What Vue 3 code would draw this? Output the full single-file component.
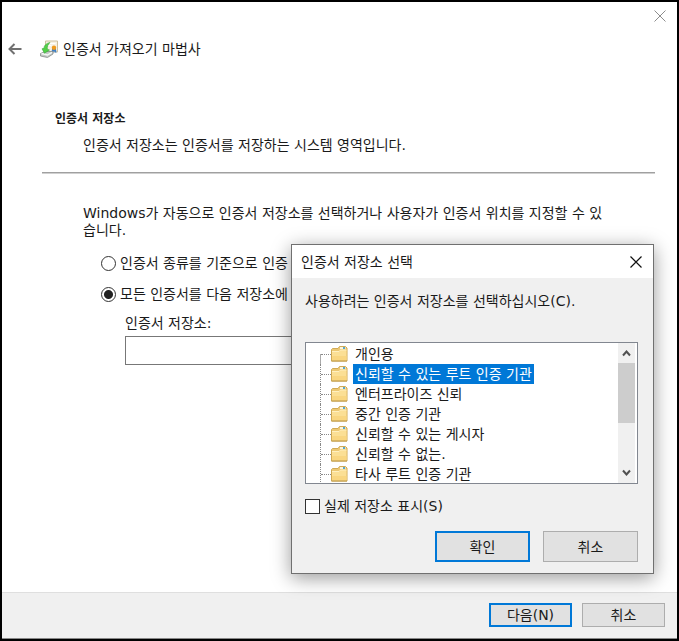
<template>
  <div class="wizard">
    <div class="top-bar">
      <button class="close-btn" type="button" aria-label="닫기">
        <svg width="12" height="12" viewBox="0 0 12 12"><path d="M.5.5l11 11M11.5.5l-11 11" stroke="#8c8c8c" fill="none" /></svg>
      </button>
    </div>

    <!-- Header -->
    <header class="header">
      <button class="back-btn" type="button" aria-label="뒤로">
        <svg width="14" height="12" viewBox="0 0 14 12">
          <path d="M6.500 1L1.500 6l5 5M1.500 6H13.500" fill="none" stroke="#707070" stroke-width="2" />
        </svg>
      </button>
      <svg class="cert-icon" width="18" height="18" viewBox="0 0 18 18">
        <path d="M5.500 1h12v11h-12z" fill="#f6f1e4" stroke="#cdbf9f" />
        <path d="M7.500 3.500h8M7.500 5.500h4" stroke="#fff" />
        <path d="M12.200 8l-.7 4.500h1.700l.8-1.500.8 1.500h1.700L15.800 8z" fill="#3f7fc4" />
        <circle cx="14" cy="7.800" r="2.200" fill="#f09a1c" />
        <path d="M.5 13.500L5 11.500h8v2.500l-5.500 3.500-7-1.500z" fill="#c3c8c5" stroke="#868c89" stroke-width=".8" />
        <path d="M1.500 13.500l6 1.500 4.500-2.700" fill="none" stroke="#f4f6f5" stroke-width="1.400" />
        <path d="M10 2.500C6 3.500 4 5.500 4 8.300L2 8.800l2.500 4.400 5-3.200-2.200-.8C7 6.500 8 4.500 10 2.500z" fill="#52d048" stroke="#3aa63a" stroke-width=".6" />
      </svg>
      <h1>인증서 가져오기 마법사</h1>
    </header>

    <!-- Page -->
    <main class="content">
      <h2>인증서 저장소</h2>
      <p class="subtitle">인증서 저장소는 인증서를 저장하는 시스템 영역입니다.</p>
      <hr />
      <div class="options">
        <p>Windows가 자동으로 인증서 저장소를 선택하거나 사용자가 인증서 위치를 지정할 수 있습니다.</p>
        <label class="radio">
          <input v-model="mode" type="radio" name="mode" value="auto" />
          <span>인증서 종류를 기준으로 인증</span>
        </label>
        <label class="radio">
          <input v-model="mode" type="radio" name="mode" value="manual" />
          <span>모든 인증서를 다음 저장소에</span>
        </label>
        <div class="store-field">
          <label for="store">인증서 저장소:</label>
          <input id="store" v-model="store" type="text" />
        </div>
      </div>
    </main>

    <footer class="footer">
      <button class="btn primary" type="button">다음(N)</button>
      <button class="btn" type="button">취소</button>
    </footer>

    <!-- Store picker -->
    <section class="dialog" role="dialog" aria-labelledby="dialog-title">
      <div class="dialog-title">
        <h2 id="dialog-title">인증서 저장소 선택</h2>
        <button class="close-btn" type="button" aria-label="닫기">
          <svg width="12" height="12" viewBox="0 0 12 12"><path d="M.5.5l11 11M11.5.5l-11 11" stroke="#111" stroke-width="1.2" fill="none" /></svg>
        </button>
      </div>
      <div class="dialog-body">
        <p>사용하려는 인증서 저장소를 선택하십시오(C).</p>
        <div class="tree-box">
          <ul class="tree">
            <li v-for="item in stores" :key="item" @click="selected = item">
              <svg width="17" height="16" viewBox="0 0 17 16">
                <path d="M.5 15V3.500l1-1H7l1.500-2h6l1.500 1.500v13z" fill="#ecc873" stroke="#d0aa57" />
                <path d="M9 2h5.500" stroke="#fdf6df" stroke-width="2" />
                <path d="M12 2h2" stroke="#5aa5c8" stroke-width="2" />
                <path d="M1 5.500h7L9.500 4H15.500V14.500H1z" fill="#fbdf95" />
                <path d="M1 5.500h7L9.500 4H15.500" fill="none" stroke="#fff0c0" />
                <path d="M1 10h14.500v4.500H1z" fill="#f9d681" />
                <path d="M.5 15h15.500" stroke="#bd9846" />
              </svg>
              <span :class="{ selected: selected === item }">{{ item }}</span>
            </li>
          </ul>
          <div class="scrollbar">
            <button type="button" aria-label="위로">
              <svg width="9" height="7" viewBox="0 0 9 7"><path d="M1 5.500l3.500-4 3.500 4" fill="none" stroke="#505050" stroke-width="2" /></svg>
            </button>
            <div class="track"><div class="thumb"></div></div>
            <button type="button" aria-label="아래로">
              <svg width="9" height="7" viewBox="0 0 9 7"><path d="M1 1.500l3.500 4 3.500-4" fill="none" stroke="#505050" stroke-width="2" /></svg>
            </button>
          </div>
        </div>
        <label class="check">
          <input v-model="showPhysical" type="checkbox" />
          <span>실제 저장소 표시(S)</span>
        </label>
        <div class="dialog-actions">
          <button class="btn primary" type="button">확인</button>
          <button class="btn" type="button">취소</button>
        </div>
      </div>
    </section>
  </div>
</template>

<script setup>
import { ref } from 'vue'

const mode = ref('manual')
const store = ref('')
const showPhysical = ref(false)

const stores = [
  '개인용',
  '신뢰할 수 있는 루트 인증 기관',
  '엔터프라이즈 신뢰',
  '중간 인증 기관',
  '신뢰할 수 있는 게시자',
  '신뢰할 수 없는.',
  '타사 루트 인증 기관',
]
const selected = ref(stores[1])
</script>

<style>
body {
  background: #fff;
}
</style>

<style scoped>
* {
  box-sizing: border-box;
}
.wizard {
  position: relative;
  display: flex;
  flex-direction: column;
  min-height: 100vh;
  border: 2px solid #000;
  overflow: hidden;
  background: #fff;
  color: #1a1a1a;
  font-family: "DejaVu Sans", "Noto Sans CJK KR", sans-serif;
  font-size: 14px;
  line-height: 18px;
}
h1, h2, p, ul {
  margin: 0;
  padding: 0;
  font-size: 14px;
  font-weight: normal;
}
button, input {
  margin: 0;
  font: inherit;
  color: inherit;
}
.top-bar {
  display: flex;
  justify-content: flex-end;
  height: 28px;
}
.close-btn, .back-btn {
  display: flex;
  align-items: center;
  justify-content: center;
  width: 34px;
  padding: 0;
  border: none;
  background: none;
}
.header {
  display: flex;
  align-items: center;
  height: 38px;
  padding-left: 6px;
}
.back-btn {
  width: 14px;
}
.cert-icon {
  margin: 0 5px 0 18px;
}

/* Page */
.content {
  flex: 1;
  padding: 42px 22px 24px 40px;
}
.content h2 {
  padding-left: 13px;
  font-size: 12px;
  font-weight: bold;
}
.subtitle {
  margin-top: 8px;
  padding-left: 41px;
}
hr {
  height: 2px;
  margin: 18px 0 31px;
  border: none;
  border-top: 1px solid #a0a0a0;
  background: #d0d0d0;
}
.options {
  padding: 0 42px 0 41px;
}
.options p {
  margin-bottom: 14px;
  line-height: 17px;
}
.radio, .check {
  display: flex;
  align-items: center;
  gap: 4px;
  height: 20px;
  white-space: nowrap;
}
.radio {
  margin: 0 0 11px 18px;
}
.radio input {
  appearance: none;
  width: 15px;
  height: 15px;
  border: 1px solid #333;
  border-radius: 50%;
  background: #fff;
}
.radio input:checked {
  background: radial-gradient(circle, #222 4px, #fff 5px);
}
.store-field {
  display: flex;
  flex-direction: column;
  gap: 4px;
  margin-top: -1px;
  padding: 0 40px 0 42px;
}
.store-field input {
  width: 100%;
  height: 29px;
  padding: 0 6px;
  border: 1px solid #777;
  background: #fff;
}

.btn {
  width: 83px;
  height: 24px;
  padding: 0;
  border: 1px solid #adadad;
  background: #e1e1e1;
  line-height: 18px;
}
.btn.primary {
  border: 2px solid #0078d7;
}
.footer {
  display: flex;
  justify-content: flex-end;
  gap: 10px;
  padding: 10px 12px 11px;
  border-top: 1px solid #dfdfdf;
  border-bottom: 1px solid #888;
  background: #f0f0f0;
}

/* Dialog */
.dialog {
  position: absolute;
  top: 242px;
  right: 23px;
  width: 363px;
  border: 1px solid #707070;
  background: #f0f0f0;
  box-shadow: 0 4px 18px rgba(0, 0, 0, 0.4);
}
.dialog-title {
  display: flex;
  align-items: center;
  justify-content: space-between;
  height: 33px;
  padding-left: 9px;
  background: #fff;
}
.dialog-body {
  padding: 13px 15px 11px 13px;
}
.dialog-body p {
  line-height: 20px;
}
.tree-box {
  display: flex;
  height: 142px;
  margin: 31px 0 12px;
  padding-right: 2px;
  border: 1px solid #828790;
  background: #fff;
}
.tree {
  flex: 1;
  overflow: hidden;
  padding: 1px 0 0 14px;
  list-style: none;
}
.tree li {
  display: flex;
  align-items: center;
  height: 20px;
  border-left: 1px dotted #888;
  white-space: nowrap;
}
.tree li:first-child {
  border-image: linear-gradient(transparent 50%, #aaa 50%) 1;
}
.tree li::before {
  content: "";
  width: 10px;
  border-top: 1px dotted #888;
}
.tree li span {
  height: 20px;
  margin-left: 5px;
  padding: 0 2px;
  line-height: 20px;
}
.tree li .selected {
  background: #0078d7;
  color: #fff;
}
.scrollbar {
  display: flex;
  flex-direction: column;
  width: 17px;
  padding: 1px 0;
  background: #f0f0f0;
}
.scrollbar button {
  display: flex;
  align-items: center;
  justify-content: center;
  height: 19px;
  padding: 0;
  border: none;
  background: none;
}
.track {
  flex: 1;
}
.thumb {
  height: 60%;
  background: #cdcdcd;
}
.check input {
  appearance: none;
  width: 15px;
  height: 15px;
  border: 1px solid #333;
  background: #fff;
}
.check input:checked {
  background: #333;
}
.dialog-actions {
  display: flex;
  justify-content: flex-end;
  gap: 13px;
  margin-top: 15px;
}
.dialog-actions .btn {
  width: 95px;
  height: 31px;
}
</style>
